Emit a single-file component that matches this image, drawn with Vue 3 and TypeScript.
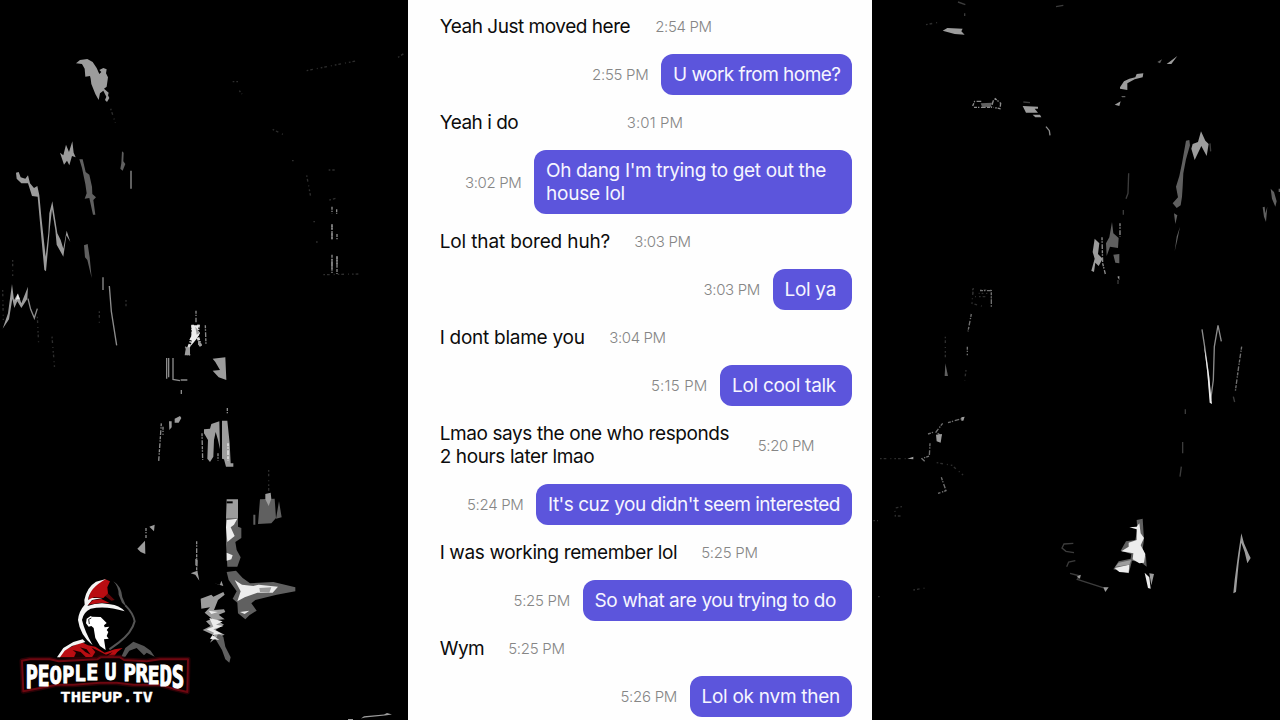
<template>
  <div class="stage">
    <svg class="backdrop" viewBox="0 0 1280 720" aria-hidden="true">
      <!-- left side, upper -->
      <g transform="translate(0 40) scale(0.33333)">
        <path class="mid" d="M228 70 L240 60 L262 57 L278 66 L290 84 L298 102 L304 96 L298 90 L310 84 L320 88 L318 100 L324 112 L320 140 L312 146 L326 158 L324 166 L328 174 L321 186 L315 180 L319 170 L310 152 L300 160 L296 180 L286 162 L274 132 L272 116 L270 108 L256 110 L254 86 L246 72Z" />
        <path class="mid" d="M180 338 L190 346 L198 314 L207 336 L217 304 L221 338 L227 352 L216 348 L208 376 L201 362 L192 374Z" />
        <path class="dim" d="M238 358 L248 358 L257 396 L268 404 L276 440 L277 462 L288 472 L280 480 L286 524 L279 524 L268 474 L254 476 L260 460 L256 432 L246 384Z" />
        <path class="mid" d="M48 398 L56 396 L62 412 L76 416 L84 406 L90 430 L102 444 L112 438 L118 466 L124 530 L137 650 L145 580 L148 520 L157 484 L163 522 L172 580 L182 600 L190 626 L200 572 L211 606 L199 586 L190 650 L170 614 L166 570 L156 508 L150 560 L138 694 L133 690 L122 570 L113 470 L96 468 L84 430 L64 430 L50 416Z" />
        <path class="dim" d="M252 616 L263 612 L269 652 L275 714 L262 660 L255 652Z" />
        <path class="mid" d="M8 866 L24 820 L36 732 L42 780 L54 760 L64 790 L84 740 L82 776 L64 804 L52 784 L43 804 L37 776 L27 838Z" />
        <path class="white" d="M46 784 L53 762 L60 778 L50 778Z" />
        <path class="line" d="M84 776 L92 808 L103 834 L112 806 M328 738 L334 814 L350 916 M309 712 V750" />
        <path class="dim" d="M390 392 h6 v54 h-6Z M366 334 L371 338 L370 364 L376 372 L368 392 L361 386 L364 370Z" />
        <path class="faint dash" d="M38 660 V710 M8 750 L10 840 M112 830 L116 914 M156 890 L164 986 M332 206 L346 248 M298 814 V850 M378 780 V800" />
      </g>

      <!-- left side, lower -->
      <g transform="translate(130 290) scale(0.33333)">
        <path class="white dash thick" d="M188 104 V140 L176 172 L168 198 M206 104 L202 136 L212 168" />
        <path class="mid dash" d="M198 62 V100 M226 106 L228 166 M166 170 L180 196" />
        <path class="white" d="M184 106 H204 V122 L210 130 L200 146 L194 154 L182 168 L186 150 L178 150 L186 134Z" />
        <path class="mid" d="M196 110 L210 128 L200 134Z M168 172 H180 V196 H164Z M204 152 L214 160 L212 170 L204 164Z" />
        <path class="line" d="M110 204 V266 M116 204 V262 M129 204 V268 L150 272 M152 270 H172 M154 300 V312" />
        <path class="mid" d="M248 206 L286 202 L289 270 L266 262 L248 242 L270 240 L256 216Z" />
        <path class="mid" d="M134 386 L150 378 L154 384 L146 398 H134Z M117 394 H125 V412 L118 420Z M222 418 L240 416 L244 402 L268 394 L270 478 L264 450 L257 426 L252 450 L250 500 L240 516 L232 506 L234 450 L222 430Z M276 392 H292 L299 460 L302 520 L310 520 V530 H288 L282 508 L276 506Z" />
        <path class="white dash" d="M294 460 V512" />
        <path class="line dash" d="M94 400 L86 514 M99 410 V434 M216 430 L218 510 M264 490 V512 M292 354 V370" />
        <path class="dim" d="M390 628 L434 626 L438 684 L424 700 L384 702Z M438 686 L447 634 L455 682Z M370 674 h6 v30 h-6Z" />
        <path class="mid" d="M406 612 L422 608 L424 626 L416 648 L406 628Z M290 628 H324 V686 H288Z" />
        <path class="faint dash" d="M416 540 V606" />
        <path class="hole" d="M290 634 H308 V640 H290Z" />
        <path class="dim" d="M288 686 H324 L324 710 L334 714 V744 L316 756 L320 780 L332 802 L322 830 H292 L288 762Z M290 846 L318 842 L338 864 L360 880 L430 876 L496 892 L496 904 L440 914 L376 930 L364 940 L380 962 L358 976 L346 988 L324 970 L322 938 L308 926 L320 904 L296 870Z" />
        <path class="white" d="M290 690 L322 686 L312 704 L302 712 L314 738 L292 756 L288 712Z M290 788 L308 796 L304 808 L290 812Z M314 870 L336 884 L370 888 L386 884 L444 890 L428 908 L382 908 L344 922 L322 934 L332 904Z M330 966 L358 962 L344 972Z" />
        <path class="mid" d="M388 894 L424 892 L418 908 L390 906Z M58 710 L74 704 L72 724Z M22 776 L30 768 L45 752 L46 792 L32 786Z M196 806 L203 810 L202 830 L196 826Z M182 850 L202 842 L208 872 L196 854Z M252 880 L270 884 L274 872 L280 888Z" />
        <path class="line dash" d="M200 754 V846 M48 714 V744" />
        <path class="mid" d="M212 926 L244 914 L250 920 L280 906 L284 914 L264 930 L252 960 L282 958 L286 966 L266 974 L284 988 L260 990 L282 1004 L256 1020 L284 1034 L258 1044 L240 1058 L252 1036 L218 1020 L242 1008 L228 994 L246 986 L224 968 L240 952 L214 956Z" />
        <path class="dim" d="M264 1030 L280 1040 L286 1070 L302 1102 L298 1118 L286 1108 L276 1080 L258 1050Z" />
        <path class="white" d="M238 984 L278 994 L258 1004 L280 1008 L250 1018 L276 1032 L246 1034 L268 1050 L240 1046 L252 1028 L230 1018 L250 1010Z M236 962 L264 966 L244 972Z" />
      </g>

      <!-- left side, specks near the panel -->
      <g transform="translate(200 40) scale(0.33333)">
        <path class="mid dash" d="M396 500 V522 M410 508 V522 M396 552 V598 M411 582 V598 M396 644 V700 M411 648 V702" />
        <path class="line" d="M396 658 V686 M411 650 V672 M396 580 V598 M396 556 V570" />
        <path class="faint dash" d="M98 125 H114 M118 152 L126 162 M218 268 L250 284 M276 362 H282 M320 92 L400 76 L474 62 M594 52 L616 38 M320 406 L332 470 M340 545 H346 M348 606 H354 M370 704 L476 702 M388 480 L412 474 M386 390 H404" />
      </g>
      <!-- bottom streak -->
      <path class="mid" d="M361 718.5 L364 716.3 L384 714.6 L387 713 L392 714.5 L385 715.6 L365 717.4Z M348 719 h5 v1 h-5Z" />

      <!-- right side, upper -->
      <g transform="translate(920 0) scale(0.33333)">
        <path class="mid" d="M68 92 L82 84 L128 86 L124 94 L134 104 L104 102Z M308 318 L354 320 L354 326 H344 L354 338 L318 338Z M338 344 L360 344 L364 352 L346 352Z" />
        <path class="mid" d="M600 262 L612 244 L628 236 L646 232 L650 222 L670 220 L668 232 L644 238 L622 250 L622 270 L600 266Z M584 314 L602 304 L598 318Z M740 192 L772 168 L754 192Z" />
        <path class="dim" d="M712 186 L726 178 L720 190Z M604 288 H616 V292 H606Z M182 310 L216 308 L212 322 L186 320Z" />
        <path class="line dash" d="M158 318 L164 304 H184 M162 322 H214 L220 302 L226 296 L242 310 L240 326 L220 322" />
        <path class="line" d="M378 380 L388 392 L390 406" />
        <path class="faint" d="M114 6 L136 14 M134 40 V48 M408 20 L430 16 M310 306 L330 308" />
        <path class="faint dash" d="M18 74 L60 66" />
        <path class="mid" d="M843 394 L856 422 L866 432 L860 468 L844 438 L824 480 L814 446 L818 432 L834 426Z" />
        <path class="dim" d="M798 422 L808 420 L810 436 L798 478 L790 520 L788 560 L786 590 L782 616 L770 624 L758 610 L774 592 L768 560 L778 528 L786 490Z M762 640 L772 646 L766 672Z M780 680 L772 720 L764 754 L770 710Z" />
        <path class="faint" d="M870 430 L872 454 M626 520 L624 580 L618 596 M610 630 V644" />
        <path class="dim" d="M576 666 L580 700 L596 714 L594 744 L570 740 L560 768 L558 730 L568 712Z M580 764 L598 762 V790 L586 788Z" />
        <path class="mid" d="M524 716 L538 730 L534 762 L548 776 L536 798 L526 788 L522 816 L514 812 L524 776 L518 756Z M592 830 L598 828 V840Z" />
        <path class="line dash" d="M546 712 L548 790 L556 822 M600 670 V710" />
        <path class="faint dash" d="M180 870 H214 V898 M158 866 V890 H200 V880 H176" />
        <path class="dim" d="M1052 566 L1062 576 L1070 604 L1066 620 L1056 596Z M1028 622 L1034 620 L1036 640 L1042 620 L1038 666 L1032 650Z M1076 566 h4 v10 h-4Z" />
      </g>

      <!-- right side, lower -->
      <g transform="translate(870 280) scale(0.33333)">
        <path class="line dash soft" d="M330 32 H364 V80 M304 102 L294 154 M292 200 V226 M234 428 L282 414 M218 430 L198 456 L214 468 M174 462 L192 456 M180 490 L178 528 L156 536 L164 544 M214 592 L228 632 L204 640" />
        <path class="mid" d="M198 464 L216 462 L212 488 L200 484Z M274 412 L284 410 L280 422 L274 422Z M112 536 L130 530 V538Z" />
        <path class="dim" d="M226 250 L234 288 L224 288Z" />
        <path class="faint dash" d="M310 24 L306 70 L340 80 M226 170 V240 M288 270 L284 302 M30 536 H110 M200 548 L246 556 L280 586 M96 680 L74 684 L76 708 H94 M10 722 H24 M130 930 L166 924 M24 950 H32" />
        <path class="line" d="M996 148 L1004 200 L1012 260 L1022 360 L1030 300 L1033 200 L1044 136 L1054 184" />
        <path class="white" d="M1002 196 L1010 236 L1018 290 L1022 336 L1026 372 L1019 368 L1012 280Z" />
        <path class="line dash soft" d="M1115 200 L1106 260 L1096 334" />
        <path class="faint" d="M1090 350 L1094 366 M946 388 V402 M938 486 V520 M934 560 L930 590 M744 0 V12" />
        <path class="faint" d="M610 790 L582 792 L576 804 L588 814 L612 818 M616 842 L596 846 L590 860 M600 880 L630 888 L622 898 L708 926" />
        <path class="mid" d="M630 896 L632 884 L620 890Z M700 922 H716 L706 936Z" />
        <path class="dim" d="M800 720 L818 716 L822 780 L818 806 L828 830 L830 860 L812 846 L786 842 L780 866 L776 880 L730 868 L746 844 L782 836 L784 822 L752 812 L768 784 L796 780 L802 748Z" />
        <path class="white" d="M778 742 L800 740 L808 730 L812 760 L822 774 L812 796 L826 822 L822 848 L808 850 L788 838 L790 820 L754 814 L776 800 L776 788 L800 780 L800 748Z M734 864 L778 854 L776 878 L748 876Z M824 878 L838 892 L842 926 L834 924Z" />
        <path class="mid" d="M736 860 L746 848 L784 840 L778 854Z M838 880 L852 882 L844 916Z" />
        <path class="mid" d="M1114 760 L1122 790 L1136 822 L1142 834 L1132 850 L1124 816 L1114 788 L1106 850 L1098 936 L1090 940 L1094 900 L1104 826Z" />
      </g>
    </svg>

    <main class="panel">
      <div v-for="(m, i) in messages" :key="i" class="row" :class="{ sent: m.sent, tall: m.lines.length > 1 }">
        <div class="bubble" :style="m.sent ? { width: m.box + 'px' } : undefined">
          <span v-for="line in m.lines" :key="line.text" v-fit="line.width" class="line-text">{{ line.text }}</span>
        </div>
        <time v-fit="56.5" :style="m.sent ? undefined : { marginLeft: m.gap + 'px' }">{{ m.time }}</time>
      </div>
    </main>

    <svg class="logo" viewBox="0 0 660 480" role="img" aria-label="People U Preds">
      <!-- hood -->
      <path class="red" d="M316 58 L290 70 L272 92 L264 122 L282 112 L310 114 L324 100 L322 82 L330 64Z" />
      <path fill="#f5f5f5" d="M318 57 L288 65 Q260 82 253 120 L254 134 Q236 154 234 180 Q240 226 278 256 Q254 214 246 180 Q250 156 272 146 Q318 136 374 154 Q358 136 330 133 L306 130 Q284 130 262 138 L276 120 L308 114 L276 114 L264 120 Q268 84 318 57Z" />
      <path class="red" d="M264 134 L278 121 L304 117 L330 130 L304 128Z" />
      <path class="red" d="M312 106 L322 98 L344 120 L334 122Z" opacity="0.5" />
      <path fill="none" stroke="#555" stroke-width="6" d="M376 136 Q400 160 404 184 Q396 218 356 248 L328 268" />
      <path fill="#555" d="M340 64 Q364 78 367 112 L380 142 L366 128 L356 104 Q356 80 340 64Z" />
      <!-- face -->
      <path fill="#fff" d="M276 170 L302 171 L320 189 L312 196 L314 202 L328 200 L320 210 L325 216 L320 228 L326 236 L312 238 L317 270 L300 258 L286 234 L281 204 L274 198 L266 200 L258 190 L260 176 L272 168Z" />
      <path fill="none" stroke="#222" stroke-width="3" d="M274 174 L266 178 L268 192" />
      <!-- shoulders -->
      <path class="red" d="M176 292 L194 270 L244 246 L264 256 L286 260 L314 278 L344 268 L368 264 L352 276 L340 292Z" />
      <path fill="#f5f5f5" d="M171 292 L190 264 L220 246 L248 238 L256 246 L216 258 L194 272 L180 292Z" />
      <path fill="#1a0000" d="M222 292 L228 278 L218 270 L242 276 L258 292Z M276 292 L286 276 L274 262 L318 284 L338 276 L318 292Z M240 262 L260 268 L272 284 L256 276Z" />
      <path fill="#555" d="M364 290 L376 264 L400 245 L432 258 L452 272 L464 290 L440 278 L432 286 L410 264 L388 272 L376 290Z" />
      <!-- name plate -->
      <path class="plate-glow" :d="plate" />
      <path class="plate" :d="plate" />
      <g class="name">
        <text v-for="(g, i) in nameGlyphs" :key="i" :transform="glyphTransform(g)">{{ g.ch }}</text>
      </g>
      <text class="site"><tspan x="181" textLength="186" lengthAdjust="spacingAndGlyphs">THEPUP</tspan><tspan x="370">.</tspan><tspan x="398" textLength="60" lengthAdjust="spacingAndGlyphs">TV</tspan></text>
    </svg>
  </div>
</template>

<script setup lang="ts">
type Line = { text: string; width: number };

interface Message {
  time: string;
  lines: Line[];
  sent?: boolean;
  box?: number; // bubble width
  gap?: number; // space before the time of a received message
}

type Glyph = { ch: string; x: number; w: number; top: number; bottom: number };

const messages: Message[] = [
  { time: "2:54 PM", gap: 25, lines: [{ text: "Yeah Just moved here", width: 190.5 }] },
  { time: "2:55 PM", sent: true, box: 191, lines: [{ text: "U work from home?", width: 167.5 }] },
  { time: "3:01 PM", gap: 108.5, lines: [{ text: "Yeah i do", width: 78.5 }] },
  {
    time: "3:02 PM", sent: true, box: 318,
    lines: [{ text: "Oh dang I'm trying to get out the", width: 280 }, { text: "house lol", width: 79 }],
  },
  { time: "3:03 PM", gap: 24, lines: [{ text: "Lol that bored huh?", width: 170.5 }] },
  { time: "3:03 PM", sent: true, box: 79.5, lines: [{ text: "Lol ya", width: 51.5 }] },
  { time: "3:04 PM", gap: 24.5, lines: [{ text: "I dont blame you", width: 145 }] },
  { time: "5:15 PM", sent: true, box: 132, lines: [{ text: "Lol cool talk", width: 104 }] },
  {
    time: "5:20 PM", gap: 28.5,
    lines: [{ text: "Lmao says the one who responds", width: 289.5 }, { text: "2 hours later lmao", width: 154.5 }],
  },
  { time: "5:24 PM", sent: true, box: 316, lines: [{ text: "It's cuz you didn't seem interested", width: 292 }] },
  { time: "5:25 PM", gap: 24, lines: [{ text: "I was working remember lol", width: 237.5 }] },
  { time: "5:25 PM", sent: true, box: 269.5, lines: [{ text: "So what are you trying to do", width: 241.5 }] },
  { time: "5:25 PM", gap: 24, lines: [{ text: "Wym", width: 44.5 }] },
  { time: "5:26 PM", sent: true, box: 162.5, lines: [{ text: "Lol ok nvm then", width: 138.5 }] },
];

const plate =
  "M66 302 L90 298 H150 L176 304 L292 298 L302 292 H360 L372 300 L440 304 L480 298 H564 L562 396 " +
  "L520 386 L480 374 H400 L350 368 L300 368 L220 374 H170 L120 384 L70 394Z";

// the name is arched: outer letters are taller
const nameGlyphs: Glyph[] = [
  { ch: "P", x: 79, w: 33, top: 313, bottom: 386 },
  { ch: "E", x: 115, w: 32, top: 314, bottom: 378 },
  { ch: "O", x: 150, w: 34, top: 316, bottom: 373 },
  { ch: "P", x: 188, w: 33, top: 316, bottom: 369 },
  { ch: "L", x: 224, w: 32, top: 314, bottom: 363 },
  { ch: "E", x: 260, w: 33, top: 312, bottom: 361 },
  { ch: "U", x: 316, w: 32, top: 308, bottom: 360 },
  { ch: "P", x: 372, w: 34, top: 312, bottom: 363 },
  { ch: "R", x: 408, w: 34, top: 314, bottom: 368 },
  { ch: "E", x: 445, w: 32, top: 316, bottom: 372 },
  { ch: "D", x: 480, w: 34, top: 315, bottom: 378 },
  { ch: "S", x: 517, w: 34, top: 313, bottom: 386 },
];

// a bold mono capital at 100px is about 53 wide and 73 tall
function glyphTransform(g: Glyph) {
  const sx = g.w / 55;
  const sy = (g.bottom - g.top) / 75;
  return `translate(${g.x + g.w / 2} ${g.bottom - 1}) scale(${sx.toFixed(3)} ${sy.toFixed(3)})`;
}

// spreads letters so that a line fills the given width
const vFit = {
  mounted(el: HTMLElement, binding: { value: number }) {
    const chars = el.textContent?.length ?? 1;
    const natural = el.getBoundingClientRect().width;
    el.style.letterSpacing = `${((binding.value - natural) / chars).toFixed(3)}px`;
  },
};
</script>

<style>
body {
  background: #000;
  overflow: hidden;
}
</style>

<style scoped>
.stage {
  position: relative;
  width: 1280px;
  height: 720px;
  background: #000;
  overflow: hidden;
  display: flex;
  justify-content: center;
}

.backdrop {
  position: absolute;
  inset: 0;
  width: 1280px;
  height: 720px;
}

.white {
  fill: #ececec;
}

.mid {
  fill: #9c9c9c;
}

.dim {
  fill: #606060;
}

.hole {
  fill: #000;
}

.line {
  fill: none;
  stroke: #8c8c8c;
  stroke-width: 4;
}

.faint {
  fill: none;
  stroke: #3c3c3c;
  stroke-width: 4;
}

.dash {
  fill: none;
  stroke-dasharray: 9 3 4 5 14 4;
}

.mid.dash {
  stroke: #8a8a8a;
  stroke-width: 4;
}

.white.dash {
  stroke: #ddd;
  stroke-width: 5;
}

.white.dash.thick {
  stroke-width: 8;
}

.faint.dash {
  stroke: #2e2e2e;
  stroke-dasharray: 5 6 8 12 3 9;
}

.line.soft {
  stroke: #707070;
}

.panel {
  position: relative;
  box-sizing: border-box;
  width: 464px;
  height: 720px;
  padding: 6px 20px 0 31.7px;
  background: #fefefe;
  display: flex;
  flex-direction: column;
  gap: 7.04px;
  font-family: Inter, "Liberation Sans", sans-serif;
}

.row {
  display: flex;
  align-items: center;
  flex: none;
  height: 41px;
}

.row.tall {
  height: 64px;
}

.row.sent {
  flex-direction: row-reverse;
}

.bubble {
  box-sizing: border-box;
  display: flex;
  flex-direction: column;
  align-items: flex-start;
  justify-content: center;
  height: 100%;
  font-size: 19px;
  line-height: 23px;
  color: #0c0c0c;
}

.sent .bubble {
  padding-left: 12px;
  border-radius: 12px;
  background: #5c55dc;
  color: #f6f5ff;
}

.line-text {
  white-space: nowrap;
}

time {
  font-size: 15px;
  font-weight: 300;
  color: #868686;
  white-space: nowrap;
}

.sent time {
  margin-right: 12.5px;
}

.logo {
  position: absolute;
  left: 0;
  top: 560px;
  width: 220px;
  height: 160px;
}

.red {
  fill: #b90d12;
}

.plate {
  fill: #050000;
  stroke: #6d0710;
  stroke-width: 6;
  stroke-linejoin: round;
}

.plate-glow {
  fill: none;
  stroke: #3a0308;
  stroke-width: 15;
  stroke-linejoin: round;
  opacity: 0.7;
}

.name text {
  font-family: "DejaVu Sans Mono", monospace;
  font-size: 100px;
  font-weight: 700;
  text-anchor: middle;
  fill: #fff;
  stroke: #fff;
  stroke-width: 4;
}

.site {
  font-family: "DejaVu Sans Mono", monospace;
  font-size: 43px;
  font-weight: 700;
  fill: #fff;
  stroke: #fff;
  stroke-width: 1;
  transform: translateY(425px);
}
</style>
